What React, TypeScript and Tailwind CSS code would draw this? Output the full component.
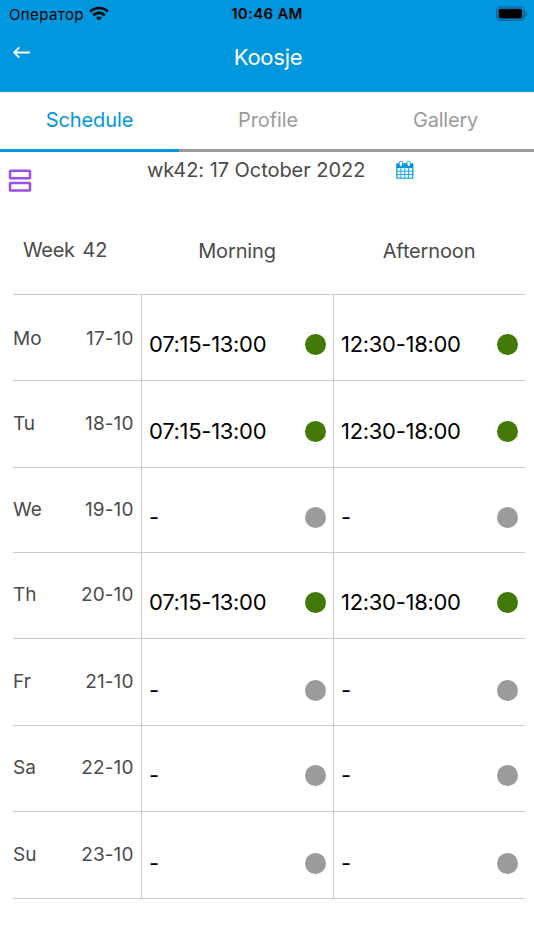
type Day = { day: string; date: string; on: boolean; h: string; label: string; cell: string };

const days: Day[] = [
  { day: 'Mo', date: '17-10', on: true, h: 'h-[86px]', label: 'pt-[29.5px]', cell: 'pt-[35px]' },
  { day: 'Tu', date: '18-10', on: true, h: 'h-[87px]', label: 'pt-[29px]', cell: 'pt-[35.5px]' },
  { day: 'We', date: '19-10', on: false, h: 'h-[85px]', label: 'pt-[28px]', cell: 'pt-[35px]' },
  { day: 'Th', date: '20-10', on: true, h: 'h-[86px]', label: 'pt-[28px]', cell: 'pt-[35px]' },
  { day: 'Fr', date: '21-10', on: false, h: 'h-[87px]', label: 'pt-[29px]', cell: 'pt-[36.5px]' },
  { day: 'Sa', date: '22-10', on: false, h: 'h-[86px]', label: 'pt-[28px]', cell: 'pt-[35px]' },
  { day: 'Su', date: '23-10', on: false, h: 'h-[87px]', label: 'pt-[29px]', cell: 'pt-[36.5px]' },
];

function Slot({ time, on, pad }: { time: string; on: boolean; pad: string }) {
  return (
    <div className={`flex w-48 items-start justify-between border-l border-[#cbcbcb] px-[7px] ${pad}`}>
      <span className="-mt-px text-[22px] leading-[30px] tracking-[-0.3px] text-black">{on ? time : '-'}</span>
      <span className={`mt-[4px] size-[21px] rounded-full ${on ? 'bg-[#427805]' : 'bg-[#9b9b9b]'}`} />
    </div>
  );
}

export default function App() {
  return (
    <div className="h-[950px] w-[534px] overflow-hidden bg-white font-['Inter','Liberation_Sans',sans-serif] text-[#4a4a4a]">
      <header className="h-[92px] bg-[#0097df]">
        <div className="grid h-7 grid-cols-3 items-center text-[15px] leading-[20px] text-black">
          <div className="flex items-center gap-[5px] pl-[9px]">
            <span className="pt-px tracking-[0.4px]">Оператор</span>
            <svg width="20" height="15" viewBox="0 0 20 15" className="-mt-[2px]" fill="none" stroke="black" strokeWidth="2.7">
              <path d="M1.200 5.500a12.800 12.800 0 0 1 17.600 0" />
              <path d="M4.200 9.200a8.600 8.600 0 0 1 11.600 0" />
              <path d="M10 14.500 7.200 11.700a4.300 4.300 0 0 1 5.600 0z" fill="black" stroke="none" />
            </svg>
          </div>
          <span className="text-center font-semibold tracking-[0.3px]">10:46 AM</span>
          <div className="flex justify-end pr-[6px]">
            <svg className="-mt-px" width="32" height="16" viewBox="0 0 32 16">
              <rect x="0.8" y="1" width="27.4" height="13.4" rx="3.6" fill="none" stroke="#005d8a" strokeWidth="1.2" />
              <rect x="2.6" y="2.8" width="23.6" height="9.8" rx="2" fill="black" />
              <path d="M29.7 5.4c2 .5 2 4.200 0 4.800z" fill="#005d8a" />
            </svg>
          </div>
        </div>
        <div className="grid grid-cols-3">
          <svg className="ml-[13px] mt-[18px]" width="18" height="13" viewBox="0 0 18 13" fill="none" stroke="white" strokeWidth="1.8" strokeLinecap="round" strokeLinejoin="round">
            <path d="M16.200 6.500H1.200M5.800 1.900 1.200 6.500l4.600 4.600" />
          </svg>
          <h1 className="mt-[14px] pl-[2px] text-center text-[22px] leading-[30px] tracking-[-0.25px] text-white">Koosje</h1>
        </div>
      </header>

      <nav className="flex h-[60px] text-center text-[20px] leading-[28px]">
        <div className="w-[179px] border-b-[3px] border-[#0097df] pt-[14px] tracking-[-0.1px] text-[#0097df]">Schedule</div>
        <div className="w-[178px] border-b-[3px] border-[#9b9b9b] pt-[14px] tracking-[-0.1px] text-[#9b9b9b]">Profile</div>
        <div className="w-[177px] border-b-[3px] border-[#9b9b9b] pt-[14px] tracking-[-0.2px] text-[#9b9b9b]">Gallery</div>
      </nav>

      <div className="flex h-[70px] items-start">
        <svg className="ml-[8px] mt-[16px]" width="24" height="25" viewBox="0 0 24 25" fill="none" stroke="#9b4fe6" strokeWidth="2.500" strokeLinejoin="round">
          <rect x="2" y="2.700" width="20" height="7.500" rx=".6" />
          <rect x="2" y="15" width="20" height="7.500" rx=".6" />
        </svg>
        <span className="ml-[115px] mt-[4px] w-[249px] whitespace-nowrap text-[20px] leading-[28px] tracking-[-0.05px]">wk42: 17 October 2022</span>
        <svg className="mt-[9px]" width="18" height="19" viewBox="0 0 18 19">
          <rect x="0.200" y="2.200" width="17.200" height="15.600" rx="1" fill="#0097df" />
          <rect x="3.200" y=".2" width="3.400" height="5.200" rx="1.600" fill="white" stroke="#0097df" strokeWidth=".9" />
          <rect x="11" y=".2" width="3.400" height="5.200" rx="1.600" fill="white" stroke="#0097df" strokeWidth=".9" />
          {[1.4, 5.3, 9.2, 13.1].map((x) =>
            [7, 10.5, 14].map((y) => <rect key={`${x}-${y}`} x={x} y={y} width="3.1" height="2.700" fill="#eefaff" />),
          )}
        </svg>
      </div>

      <section className="ml-[13px] w-[512px]">
        <div className="flex h-[72px] text-[20px] leading-[28px] tracking-[-0.15px]">
          <div className="flex w-32 gap-[8px] pl-[10px] pt-[14px] tracking-[-0.35px]">
            <span>Week</span><span>42</span>
          </div>
          <div className="w-48 pt-[15px] text-center">Morning</div>
          <div className="w-48 pt-[15px] text-center">Afternoon</div>
        </div>
        <div className="border-t border-[#cbcbcb]">
          {days.map((d) => (
            <div key={d.day} className={`flex border-b border-[#cbcbcb] ${d.h}`}>
              <div className={`flex w-32 justify-between pr-[7.5px] text-[19px] leading-[28px] ${d.label}`}>
                <span>{d.day}</span>
                <span className="tracking-[0.1px]">{d.date}</span>
              </div>
              <Slot time="07:15-13:00" on={d.on} pad={d.cell} />
              <Slot time="12:30-18:00" on={d.on} pad={d.cell} />
            </div>
          ))}
        </div>
      </section>
    </div>
  );
}
